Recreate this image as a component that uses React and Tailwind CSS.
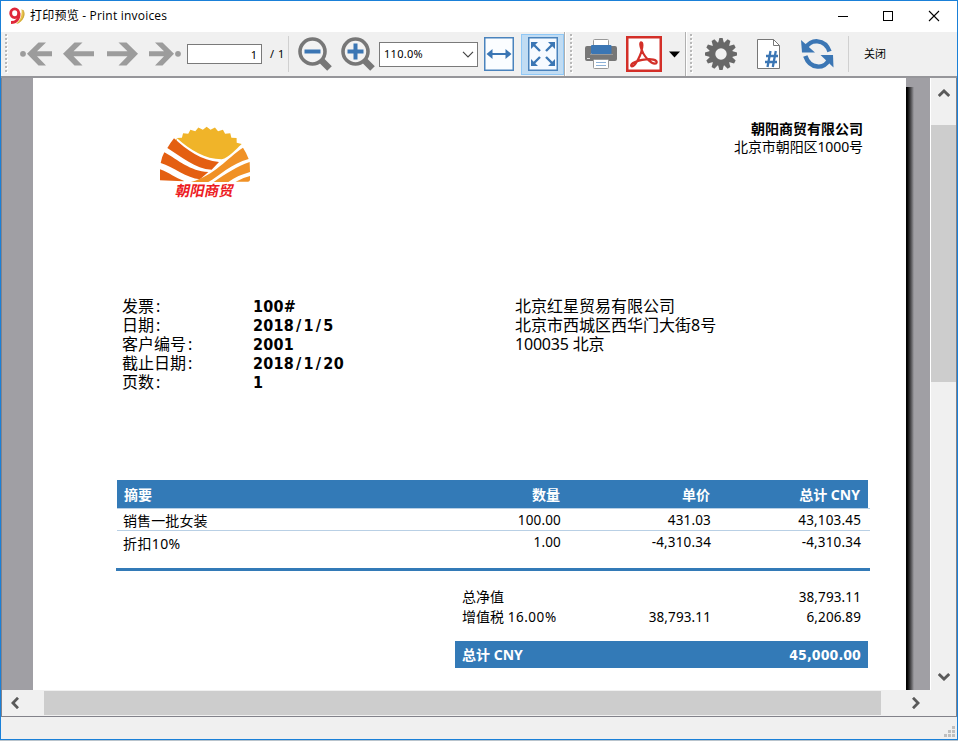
import React from "react";

const grey = "#9c9c9c";

function Grip({ className = "" }) {
  return (
    <svg className={"shrink-0 " + className} width="3" height="40" viewBox="0 0 3 40">
      {Array.from({ length: 10 }, (_, i) => (
        <g key={i}>
          <rect x="1" y={i * 4 + 1} width="2" height="2" fill="#fff" />
          <rect x="0" y={i * 4} width="2" height="2" fill="#b8b8b8" />
        </g>
      ))}
    </svg>
  );
}

function Arrow({ dot = false, flip = false, className = "" }) {
  return (
    <svg
      className={"shrink-0 " + (flip ? "-scale-x-100 " : "") + className}
      width={dot ? 32 : 31}
      height="24"
      viewBox={dot ? "-1 0 32 24" : "0 0 31 24"}
    >
      {dot ? (
        <>
          <circle cx="2" cy="11.8" r="2.9" fill={grey} />
          <path d="M6 11.8 17.500 .5H25L16 9.200H31V14.300H16L25 23.500H17.500Z" fill={grey} />
        </>
      ) : (
        <path d="M0 11.800 11.500 .5H19.500L10.500 9.200H31V14.300H10.500L19.500 23.500H11.500Z" fill={grey} />
      )}
    </svg>
  );
}

function Magnifier({ plus = false, className = "" }) {
  return (
    <svg className={"shrink-0 " + className} width="34" height="34" viewBox="0 0 34 34">
      <path d="M24 24 31.500 31.500" stroke="#777" strokeWidth="6.500" />
      <circle cx="14.500" cy="14.500" r="12.500" fill="#f3f3f3" stroke="#777" strokeWidth="3.600" />
      <path d={plus ? "M6.500 14.500H22.500M14.500 6.500V22.500" : "M6.500 14.500H22.500"} stroke="#3b76b4" strokeWidth="4" />
    </svg>
  );
}

function FitWidth() {
  return (
    <svg className="ml-[6px] shrink-0" width="30" height="34" viewBox="0 0 30 34">
      <rect x=".75" y=".75" width="28.500" height="32.500" fill="#fbfdff" stroke="#4a83bd" strokeWidth="1.500" />
      <path d="M6 17H24" stroke="#3b76b4" strokeWidth="2" />
      <path d="M2.500 17 8.500 12V22ZM27.500 17 21.500 12V22Z" fill="#3b76b4" />
    </svg>
  );
}

function FitPage() {
  return (
    <svg width="30" height="34" viewBox="0 0 30 34">
      <rect x=".75" y=".75" width="28.500" height="32.500" fill="#f6faff" stroke="#4a83bd" strokeWidth="1.500" />
      <path d="M6 8 12 14M24 8 18 14M6 26 12 20M24 26 18 20" stroke="#3b76b4" strokeWidth="2.400" />
      <path d="M3 5H10L3 12ZM27 5H20L27 12ZM3 29H10L3 22ZM27 29H20L27 22Z" fill="#3b76b4" />
    </svg>
  );
}

function Printer() {
  return (
    <svg className="ml-[12px] shrink-0" width="32" height="30" viewBox="0 0 32 30">
      <rect x="8.500" y=".5" width="15" height="8" rx="1" fill="#fff" stroke="#999" />
      <path d="M2 7H6V15H26V7H30Q32 7 32 9V20Q32 22 30 22H2Q0 22 0 20V9Q0 7 2 7Z" fill="#777" />
      <rect x="6" y="6" width="20.500" height="9" rx="1" fill="#3b76b4" />
      <rect x="5" y="15" width="23" height="1" fill="#999" />
      <rect x="8.500" y="20.500" width="15" height="9" rx="1" fill="#fff" stroke="#999" />
      <path d="M11 23.500H21M11 26.500H21" stroke="#8db1d7" />
      <path d="M2 19.500H5" stroke="#ddd" />
    </svg>
  );
}

function Pdf() {
  return (
    <svg className="ml-[9px] shrink-0" width="36" height="36" viewBox="0 0 36 36">
      <rect x="1.250" y="1.250" width="33.500" height="33.500" fill="#fff" stroke="#d32f28" strokeWidth="2.500" />
      <path
        d="M15.500 6.500C13.500 6 14.300 10.500 15.600 13.500C17.500 19 21 23.500 25.500 26.500C28 28 30.500 28.300 30.700 26.300C30.900 23.500 25 22.800 20 23.300C15 23.800 10.500 25 7 27C5 28.200 4.500 30.300 6 30.300C8.500 30.300 12 24 14 19.500C15.800 15.500 17.500 7 15.500 6.500Z"
        fill="none"
        stroke="#d32f28"
        strokeWidth="2.200"
      />
    </svg>
  );
}

function Gear() {
  return (
    <svg className="ml-[12px] shrink-0" width="32" height="32" viewBox="-16 -16 32 32">
      {Array.from({ length: 12 }, (_, i) => (
        <path key={i} d="M-3.200 -10 -1.600 -16H1.600L3.200 -10Z" fill="#686868" transform={`rotate(${i * 30})`} />
      ))}
      <circle r="8.700" fill="none" stroke="#686868" strokeWidth="6" />
    </svg>
  );
}

function PageNumber() {
  return (
    <svg className="ml-[20px] shrink-0" width="24" height="31" viewBox="0 0 24 31">
      <path d="M.5 .5H16.500L22.500 6.500V29.500H.5Z" fill="#fff" stroke="#777" />
      <path d="M16.500 .5V6.500H22.500" fill="none" stroke="#777" />
      <path d="M13.500 12 10.500 28M18.800 12 15.800 28M9 17H21M8 23H20" stroke="#3b76b4" strokeWidth="2.300" />
    </svg>
  );
}

function Refresh() {
  return (
    <svg className="ml-[20px] shrink-0" width="33" height="30" viewBox="0 0 33 30">
      <path d="M4.500 9.500C9 -.5 24 -.5 28.500 12.500" fill="none" stroke="#3b76b4" strokeWidth="4.500" />
      <path d="M0 1 1 13.500H14Z" fill="#3b76b4" />
      <path d="M28 20.500C24 30.500 9 30.500 4.300 17" fill="none" stroke="#3b76b4" strokeWidth="4.500" />
      <path d="M32.500 28.500 32 16H19.500Z" fill="#3b76b4" />
    </svg>
  );
}

function TitleBar() {
  return (
    <header className="flex h-[31px] items-center bg-white pl-[7px]">
      <svg width="18" height="18" viewBox="0 0 18 18" className="-mt-[2px] shrink-0">
        <path d="M13.500 2C18.500 5 17.500 14 8 17C13 13 14 8 13.500 2Z" fill="#e8c34a" />
        <path d="M15 3C17.500 7 15 13 9.500 16.500" fill="none" stroke="#c49a35" strokeWidth=".8" />
        <ellipse cx="6.700" cy="6.300" rx="4" ry="4.400" fill="none" stroke="#df2639" strokeWidth="2.800" />
        <path d="M11 6C11.700 11.500 8.500 15.500 3 15.500" fill="none" stroke="#df2639" strokeWidth="2.800" />
      </svg>
      <h1 className="-mt-px ml-[4px] whitespace-pre font-['Open_Sans','Noto_Sans_CJK_SC',sans-serif] text-[12px] font-normal leading-[18px] tracking-[0.21px] text-black">
        打印预览 - Print invoices
      </h1>
      <svg className="-mt-[2px] ml-auto mr-[17px]" width="102" height="12" viewBox="0 0 102 12">
        <path d="M0 6.500H10" stroke="#000" />
        <rect x="45.500" y="1.500" width="9" height="9" fill="none" stroke="#000" />
        <path d="M91 1 101 11M101 1 91 11" stroke="#000" strokeWidth="1.100" />
      </svg>
    </header>
  );
}

function Toolbar() {
  return (
    <nav className="flex h-[46px] items-center border-b-2 border-[#96969a] bg-[#f0f0f0] pl-[4px] font-['Noto_Sans','Noto_Sans_CJK_SC',sans-serif] text-black">
      <Grip />
      <Arrow dot className="ml-[12px]" />
      <Arrow className="ml-[11px]" />
      <Arrow flip className="ml-[13px]" />
      <Arrow dot flip className="ml-[11px]" />
      <div className="ml-[6px] h-[20px] w-[75px] border border-[#7a7a7a] bg-white pr-[4px] text-right text-[11px] leading-[20px]">1</div>
      <span className="ml-[8px] w-[17px] whitespace-pre text-[11px] leading-[20px] tracking-[0.5px]">/ 1</span>
      <div className="ml-[1px] h-[36px] w-px bg-[#d0d0d0]" />
      <Magnifier className="ml-[9px]" />
      <Magnifier plus className="ml-[9px]" />
      <div className="ml-[4px] flex h-[25px] w-[99px] items-center justify-between border border-[#7a7a7a] bg-white pl-[4px] pr-[3px] text-[11px]">
        <span className="tracking-[0.3px]">110.0%</span>
        <svg width="12" height="7" viewBox="0 0 12 7">
          <path d="M1 .8 6 5.800 11 .8" fill="none" stroke="#444" strokeWidth="1.200" />
        </svg>
      </div>
      <FitWidth />
      <div className="ml-[7px] flex h-[41px] w-[43px] shrink-0 items-center justify-center border border-[#90c8f6] bg-[#c1dcf3]">
        <FitPage />
      </div>
      <div className="h-full w-[2px] border-l border-r border-l-[#b0b0b0] border-r-white" />
      <Grip className="ml-[4px]" />
      <Printer />
      <Pdf />
      <svg className="ml-[7px] shrink-0" width="11" height="7" viewBox="0 0 11 7">
        <path d="M0 .5H11L5.500 6.500Z" fill="#000" />
      </svg>
      <div className="ml-[5px] h-full w-[2px] border-l border-r border-l-[#b0b0b0] border-r-white" />
      <Grip className="ml-[3px]" />
      <Gear />
      <PageNumber />
      <Refresh />
      <div className="ml-[14px] h-[36px] w-px bg-[#d0d0d0]" />
      <span className="ml-[15px] text-[11px] leading-[20px]">关闭</span>
    </nav>
  );
}

// Saw-toothed upper rim of the sun, closed by the curve of the fields below it.
function sunPath() {
  const pts = [];
  for (let i = -10; i <= 10; i++) {
    const a = ((-90 + i * 5.8) * Math.PI) / 180;
    const r = i % 2 ? 0.92 : 1;
    pts.push(`${(155 + 124 * r * Math.cos(a)).toFixed(1)} ${(130 + 110 * r * Math.sin(a)).toFixed(1)}`);
  }
  return `M${pts.join("L")}C240 90 222 112 200 118C150 118 108 92 66 55Z`;
}

function Logo() {
  return (
    <div className="flex w-[90px] flex-col items-center">
      <svg width="90" height="56" viewBox="15 18 270 168">
        <path d={sunPath()} fill="#f0b429" />
        <path d="M57 55C95 90 140 122 192 126L170 149C120 147 80 110 37 84Q46 69 57 55Z" fill="#e45f11" />
        <path d="M28 97C70 120 105 154 160 156L135 178C95 175 55 140 17 129Q20 111 28 97Z" fill="#e45f11" />
        <path d="M15 148C42 158 62 174 86 182V184L15 181Z" fill="#e45f11" />
        <path d="M264 83Q274 98 281 117C230 130 190 170 160 186H108C180 165 215 115 264 83Z" fill="#f09126" />
        <path d="M284 126 285 156C260 163 240 172 220 186H176C215 160 245 140 284 126Z" fill="#f09126" />
        <path d="M285 168V180Q284 185 279 185H242Q260 174 285 168Z" fill="#f09126" />
      </svg>
      <span className="-mt-px -skew-x-12 whitespace-nowrap font-['Noto_Sans_CJK_SC',sans-serif] text-[14.500px] font-bold leading-[18px] text-[#ed1c24]">朝阳商贸</span>
    </div>
  );
}

const details = [
  ["发票", "100#"],
  ["日期", "2018/1/5"],
  ["客户编号", "2001"],
  ["截止日期", "2018/1/20"],
  ["页数", "1"],
];

const items = [
  ["销售一批女装", "100.00", "431.03", "43,103.45"],
  ["折扣10%", "1.00", "-4,310.34", "-4,310.34"],
];

const columns = "grid grid-cols-[338px_113px_150px_150px]";

function DateValue({ text }) {
  return text.split("/").map((part, i) => (
    <React.Fragment key={i}>
      {i > 0 && <span className="px-[2px]">/</span>}
      {part}
    </React.Fragment>
  ));
}

function Invoice() {
  return (
    <article className="h-[612px] w-[873px] shrink-0 bg-white font-['Noto_Sans','Noto_Sans_CJK_SC',sans-serif] text-black">
      <div className="flex h-[219px] justify-between pl-[127px] pr-[43px]">
        <div className="pt-[48px]">
          <Logo />
        </div>
        <div className="pt-[42px] text-right text-[14px] leading-[18px]">
          <p className="font-bold">朝阳商贸有限公司</p>
          <p className="tracking-[-0.1px]">北京市朝阳区1000号</p>
        </div>
      </div>

      <div className="flex h-[183px] text-[16px] leading-[19px]">
        <dl className="grid w-[482px] auto-rows-[19px] grid-cols-[131px_1fr] pl-[89px]">
          {details.map(([k, v]) => (
            <React.Fragment key={k}>
              <dt>
                {k}
                <span className="pl-[2px]">:</span>
              </dt>
              <dd className="font-['DejaVu_Sans_Condensed','DejaVu_Sans',sans-serif] font-bold tracking-[0.25px]">
                <DateValue text={v} />
              </dd>
            </React.Fragment>
          ))}
        </dl>
        <address className="not-italic">
          <p>北京红星贸易有限公司</p>
          <p>北京市西城区西华门大街8号</p>
          <p className="tracking-[-0.2px]">100035 北京</p>
        </address>
      </div>

      <section className="ml-[83px] w-[754px] text-[14px]">
        <div className="pl-px">
          <div className={columns + " h-[28px] w-[751px] bg-[#337ab7] text-[14px] font-bold leading-[29px] text-white"}>
            <span className="pl-[7px]">摘要</span>
            <span className="pr-[8px] text-right">数量</span>
            <span className="pr-[8px] text-right">单价</span>
            <span className="pr-[8px] text-right">总计 CNY</span>
          </div>
          {items.map((row, r) => (
            <div key={row[0]} className={columns + " h-[22px] border-t border-[#b9d0e5] leading-[22px]"}>
              <span className={r ? "pl-[6px] pt-[2px] tracking-[0.4px]" : "pl-[6px] pt-px tracking-[0.1px]"}>{row[0]}</span>
              {row.slice(1).map((v, i) => (
                <span key={i} className="pr-[7px] text-right text-[13.500px] tracking-[0.15px]">{v}</span>
              ))}
            </div>
          ))}
        </div>
        <div className="mt-[16px] h-[3px] bg-[#337ab7]" />
        <div className="ml-[339px] mt-[16px] w-[413px] leading-[20px]">
          <div className="grid grid-cols-[113px_150px_150px]">
            <span className="pl-[7px]">总净值</span>
            <span />
            <span className="pr-[7px] text-right text-[13.500px] tracking-[0.12px]">38,793.11</span>
            <span className="whitespace-pre pl-[7px]">增值税 <span className="text-[13.500px] tracking-[0.55px]">16.00%</span></span>
            <span className="pr-[7px] text-right text-[13.500px] tracking-[0.12px]">38,793.11</span>
            <span className="pr-[7px] text-right text-[13.500px] tracking-[0.12px]">6,206.89</span>
          </div>
          <div className="mt-[14px] flex h-[27px] justify-between bg-[#337ab7] px-[7px] text-[14px] font-bold leading-[28px] text-white">
            <span>总计 CNY</span>
            <span className="font-['DejaVu_Sans_Condensed','DejaVu_Sans',sans-serif] tracking-[0.1px]">45,000.00</span>
          </div>
        </div>
      </section>
    </article>
  );
}

function Chevron({ className = "" }) {
  return (
    <svg className={className} width="12" height="8" viewBox="0 0 12 8">
      <path d="M.8 7 6 1.900 11.200 7" fill="none" stroke="#5a5a5a" strokeWidth="2.800" />
    </svg>
  );
}

export default function App() {
  return (
    <div className="h-[741px] w-[958px] overflow-hidden bg-[#b9c4cd]">
      <div className="flex h-[740px] flex-col border border-[#1a80d8]">
        <TitleBar />
        <Toolbar />
        <main className="flex h-[612px] border-l border-r border-[#82828a]">
          <div className="flex w-[928px] shrink-0 overflow-hidden bg-[#a09fa4] pl-[31px]">
            <Invoice />
            <div className="mt-[9px] h-full w-[8px] bg-linear-to-r from-black to-[#a09fa4]" />
          </div>
          <div className="flex grow flex-col items-center border-l border-white bg-[#f0f0f0]">
            <div className="flex h-[47px] w-full items-start justify-center pt-[11px]">
              <Chevron />
            </div>
            <div className="h-[257px] w-full bg-[#cdcdcd]" />
            <Chevron className="mb-[9px] mt-auto rotate-180" />
          </div>
        </main>
        <div className="flex h-[27px] items-center border-x border-b border-[#82828a] bg-[#f0f0f0]">
          <div className="flex w-[42px] pl-[7px]">
            <Chevron className="-rotate-90" />
          </div>
          <div className="h-[24px] w-[837px] bg-[#cdcdcd]" />
          <Chevron className="ml-[29px] rotate-90" />
        </div>
        <footer className="flex grow items-end justify-end bg-[#f0f0f0] pb-[2px] pr-[2px]">
          <svg width="11" height="11" viewBox="0 0 11 11" fill="#bfbfbf">
            <path d="M8 0h3v3h-3zM4 4h3v3h-3zM8 4h3v3h-3zM0 8h3v3h-3zM4 8h3v3h-3zM8 8h3v3h-3z" />
          </svg>
        </footer>
      </div>
    </div>
  );
}
